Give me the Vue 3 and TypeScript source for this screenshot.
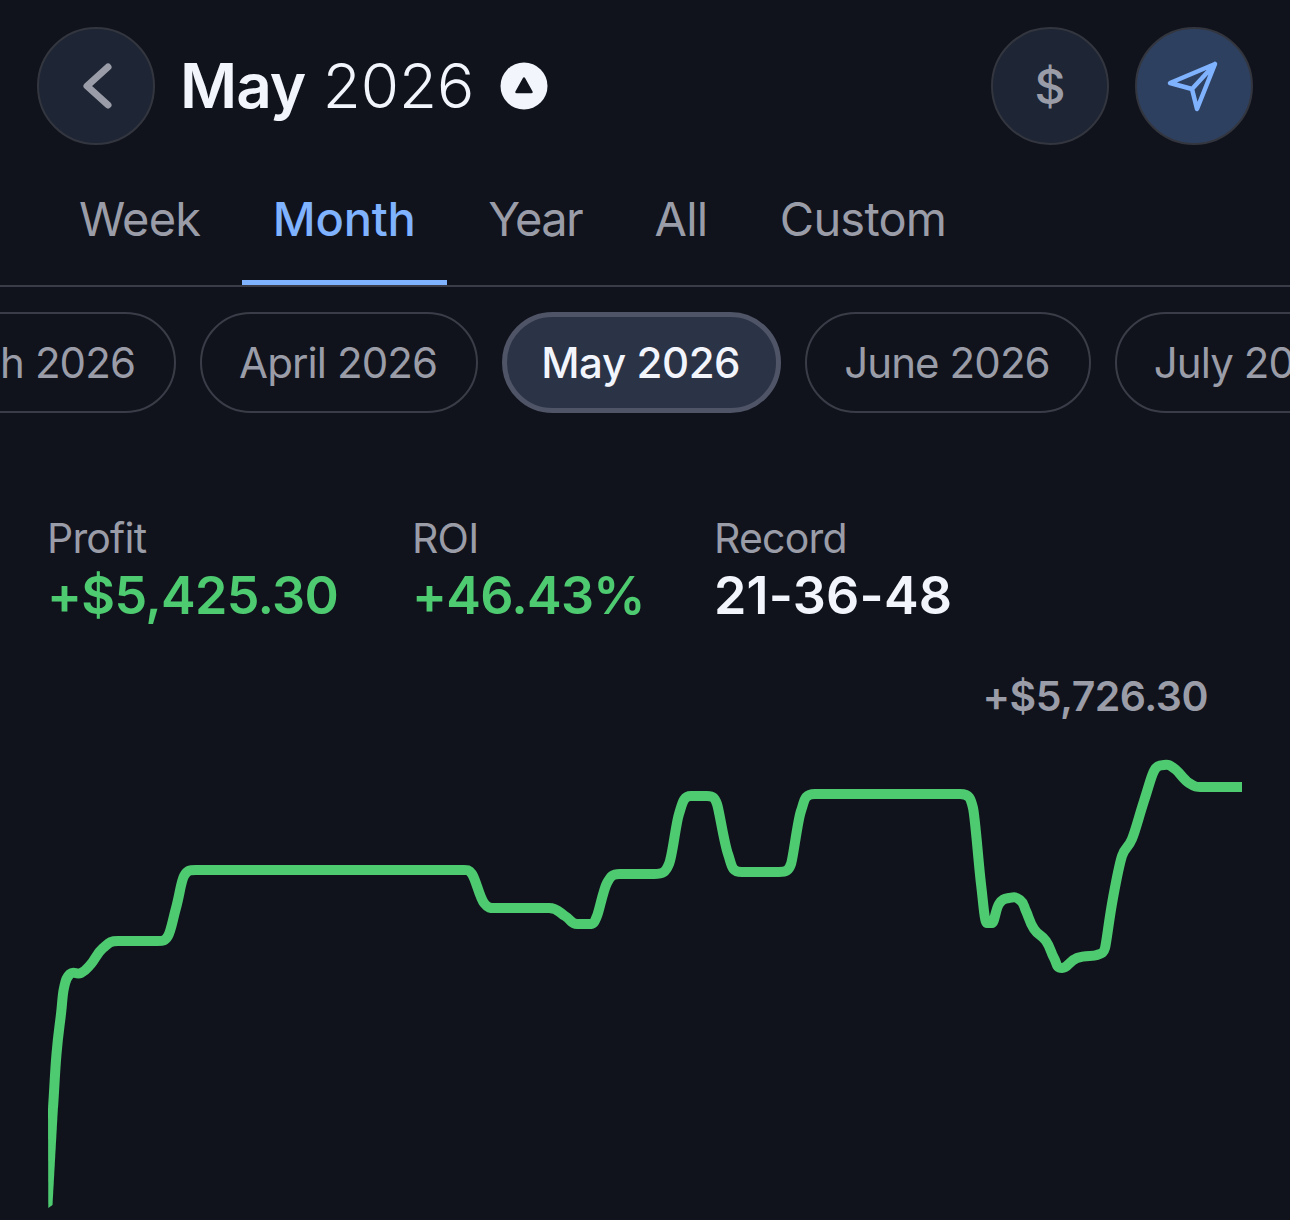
<script setup lang="ts">
import { computed } from 'vue';

const tabs = ['Week', 'Month', 'Year', 'All', 'Custom'];
const months = ['March 2026', 'April 2026', 'May 2026', 'June 2026', 'July 2026'];

// chart points in page coords, shifted by the chart's top below
const raw: Array<[number, number]> = [
  [53,1107],[56.5,1053],[61,1013],[64,987],[70,973],[81,972],[91,963],[103,947],[118,940],[157,940],[168,935],
  [176,907],[184,875],[196,869],[460,869],[472,873],[484,902],[498,907],[549,907],[565,915],[577,923],
  [589,923],[597,915],[607,882],[620,873],[654,873],[669,863],[679,813],[691,795],[707,795],[717,803],
  [728,853],[742,871],[779,871],[791,863],[801,810],[815,793],[960,793],[973,807],[981,883],[987,922],
  [992,922],[999,903],[1009,897],[1020,899],[1026,910],[1034,928],[1046,940],[1054,957],[1062,967],[1077,957],
  [1097,954],[1105,947],[1113,897],[1122,855],[1132,838],[1144,800],[1154,770],[1164,764],[1175,768],[1189,782],
  [1203,786],[1242,786],
];
const pts = raw.map(([x, y]) => [x, y - 660]);

function dist(a: number[], b: number[]) {
  return Math.hypot(b[0] - a[0], b[1] - a[1]);
}

// tangent through the neighbours, handle limited by the shorter segment so long flats stay flat
function handle(i: number) {
  const p = pts[i];
  const prev = pts[Math.max(i - 1, 0)];
  const next = pts[Math.min(i + 1, pts.length - 1)];
  const short = Math.min(i > 0 ? dist(prev, p) : 1e9, i < pts.length - 1 ? dist(p, next) : 1e9);
  const h = short * 0.5;
  if (i > 0 && i < pts.length - 1 && (prev[1] === p[1] || next[1] === p[1])) return [h, 0];
  const len = dist(prev, next) || 1;
  return [((next[0] - prev[0]) / len) * h, ((next[1] - prev[1]) / len) * h];
}

const linePath = computed(() => {
  let d = `M${pts[0][0]} ${pts[0][1]}`;
  for (let i = 0; i < pts.length - 1; i++) {
    const a = handle(i);
    const b = handle(i + 1);
    const p1 = pts[i];
    const p2 = pts[i + 1];
    d += ` C${(p1[0] + a[0]).toFixed(1)} ${(p1[1] + a[1]).toFixed(1)} ${(p2[0] - b[0]).toFixed(1)} ${(p2[1] - b[1]).toFixed(1)} ${p2[0]} ${p2[1]}`;
  }
  return d;
});
</script>

<template>
  <div class="screen">
    <header class="top">
      <button class="round">
        <svg width="118" height="118" viewBox="0 0 118 118" fill="none">
          <path d="M71 40 50 59l21 19" stroke="#9a9da8" stroke-width="7" stroke-linecap="round" stroke-linejoin="round" />
        </svg>
      </button>
      <h1 class="title"><b>May</b> 2026</h1>
      <span class="badge">
        <svg width="48" height="48" viewBox="0 0 48 48">
          <circle cx="24" cy="24" r="23.5" fill="#f2f5fb" />
          <path d="M24 16.5 31.5 30h-15z" fill="#11131c" stroke="#11131c" stroke-width="2.5" stroke-linejoin="round" />
        </svg>
      </span>
      <div class="top-actions">
        <button class="round dollar">$</button>
        <button class="round active">
          <svg width="118" height="118" viewBox="0 0 118 118" fill="none">
            <path d="M80 37 35 56l22 6 5 20zM80 37 57 62" stroke="#7fb2ff" stroke-width="4.5" stroke-linecap="round" stroke-linejoin="round" />
          </svg>
        </button>
      </div>
    </header>

    <nav class="tabs">
      <a v-for="t in tabs" :key="t" class="tab" :class="{ on: t === 'Month' }">{{ t }}</a>
    </nav>

    <div class="pills">
      <div class="track">
        <span v-for="m in months" :key="m" class="pill" :class="{ on: m === 'May 2026' }">{{ m }}</span>
      </div>
    </div>

    <section class="stats">
      <div class="stat">
        <span class="label">Profit</span>
        <span class="value green">+$5,425.30</span>
      </div>
      <div class="stat">
        <span class="label">ROI</span>
        <span class="value green">+46.43%</span>
      </div>
      <div class="stat">
        <span class="label">Record</span>
        <span class="value record">21-36-48</span>
      </div>
    </section>

    <div class="peak">+$5,726.30</div>

    <svg class="chart" width="1290" height="500" viewBox="0 60 1290 500" fill="none">
      <path :d="linePath" stroke="#4ecb71" stroke-width="10" stroke-linejoin="round" />
      <!-- thin start of the line -->
      <path d="M48 447 48.3 547 52.5 544 57.9 447 53 440z" fill="#4ecb71" />
    </svg>
  </div>
</template>

<style>
html, body {
  background: #11131c;
}
</style>

<style scoped>
.screen {
  width: 1290px;
  height: 1220px;
  overflow: hidden;
  background: #11131c;
  color: #f2f5fb;
  font-family: Inter, "Liberation Sans", sans-serif;
}

.top {
  display: flex;
  align-items: center;
  padding: 27px 37px 0 37px;
}

.round {
  width: 118px;
  height: 118px;
  padding: 0;
  flex: none;
  border: 2px solid #33363f;
  border-radius: 50%;
  background: #1e2534;
  display: flex;
  align-items: center;
  justify-content: center;
  box-sizing: border-box;
}

.round svg {
  flex: none;
}

.title {
  margin: 0 0 0 25px;
  font-size: 62px;
  font-weight: 300;
  line-height: 1;
  letter-spacing: 0;
}

.title b {
  font-weight: 600;
  letter-spacing: -1px;
}

.badge {
  display: flex;
  margin-left: 26px;
}

.top-actions {
  margin-left: auto;
  display: flex;
  gap: 26px;
}

.dollar {
  font-family: inherit;
  font-size: 48px;
  font-weight: 500;
  color: #9a9da8;
}

.active {
  background: #2e405f;
}

.tabs {
  display: flex;
  gap: 10.5px;
  height: 142px;
  box-sizing: border-box;
  padding: 0 0 0 48px;
  border-bottom: 2px solid #3a3d47;
}

.tab {
  display: block;
  padding: 44px 31px 0;
  font-size: 47px;
  line-height: 60px;
  letter-spacing: -0.8px;
  color: #9a9da8;
}

.tab:nth-child(3) {
  letter-spacing: -1.6px;
}

.tab.on {
  color: #7fb2ff;
  font-weight: 500;
  letter-spacing: -0.2px;
  box-shadow: inset 0 -5px 0 #7fb2ff;
}

.pills {
  overflow: hidden;
  padding-top: 25px;
}

.track {
  display: flex;
  gap: 24px;
  margin-left: -136px;
  width: 1600px;
}

.pill {
  flex: none;
  height: 101px;
  box-sizing: border-box;
  padding: 0 39px 0 37px;
  display: flex;
  align-items: center;
  border: 2px solid #3a3d47;
  border-radius: 51px;
  font-size: 42px;
  letter-spacing: -0.9px;
  color: #9a9da8;
}

.pill.on {
  background: #2b3347;
  border: 5px solid #4f5466;
  padding: 0 36px 0 34px;
  color: #f2f5fb;
  font-weight: 500;
  letter-spacing: -0.4px;
}

.stats {
  display: grid;
  grid-template-columns: 365px 302px auto;
  padding: 100px 0 0 47px;
}

.stat {
  display: flex;
  flex-direction: column;
}

.label {
  font-size: 41px;
  line-height: 50px;
  letter-spacing: -0.8px;
  color: #9a9da8;
}

.value {
  font-size: 52px;
  line-height: 65px;
  font-weight: 600;
  letter-spacing: -0.7px;
}

.record {
  letter-spacing: 0.2px;
}

.green {
  color: #4ecb71;
}

.peak {
  padding: 43px 82px 0 0;
  text-align: right;
  font-size: 41px;
  line-height: 50px;
  font-weight: 600;
  letter-spacing: -0.5px;
  color: #9a9da8;
}

.chart {
  display: block;
}
</style>
